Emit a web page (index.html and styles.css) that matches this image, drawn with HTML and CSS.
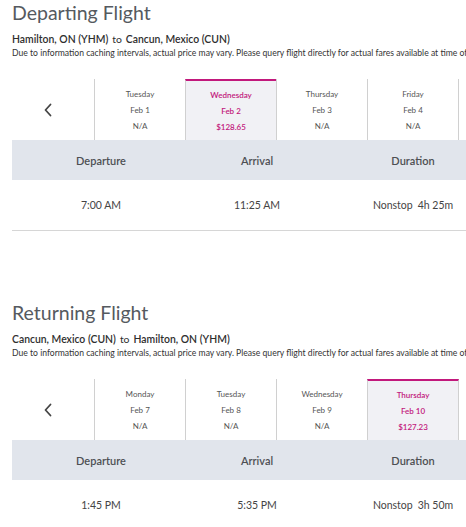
FILE: index.html
```html
<!DOCTYPE html>
<html>
<head>
<meta charset="utf-8">
<link rel="stylesheet" href="styles.css">
</head>
<body>
<div class="page">
  <section class="flight">
    <h1 class="title">Departing Flight</h1>
    <div class="route"><span class="city">Hamilton, ON (YHM)</span><span class="to">to</span><span class="city">Cancun, Mexico (CUN)</span></div>
    <p class="note">Due to information caching intervals, actual price may vary. Please query flight directly for actual fares available at time of query.</p>
    <div class="dates">
      <div class="nav"><svg width="10" height="14" viewBox="0 0 10 14"><path d="M7.5 1.5 L2.5 7 L7.5 12.5" fill="none" stroke="#444" stroke-width="1.8" stroke-linecap="round" stroke-linejoin="round"/></svg></div>
      <div class="day"><span>Tuesday</span><span>Feb 1</span><span>N/A</span></div>
      <div class="day selected"><span>Wednesday</span><span>Feb 2</span><span>$128.65</span></div>
      <div class="day"><span>Thursday</span><span>Feb 3</span><span>N/A</span></div>
      <div class="day"><span>Friday</span><span>Feb 4</span><span>N/A</span></div>
    </div>
    <div class="table">
      <div class="thead">
        <div>Departure</div><div>Arrival</div><div>Duration</div>
      </div>
      <div class="trow">
        <div>7:00 AM</div><div>11:25 AM</div><div><span class="stops">Nonstop</span>4h 25m</div>
      </div>
    </div>
  </section>
  <section class="flight">
    <h1 class="title">Returning Flight</h1>
    <div class="route"><span class="city">Cancun, Mexico (CUN)</span><span class="to">to</span><span class="city">Hamilton, ON (YHM)</span></div>
    <p class="note">Due to information caching intervals, actual price may vary. Please query flight directly for actual fares available at time of query.</p>
    <div class="dates">
      <div class="nav"><svg width="10" height="14" viewBox="0 0 10 14"><path d="M7.5 1.5 L2.5 7 L7.5 12.5" fill="none" stroke="#444" stroke-width="1.8" stroke-linecap="round" stroke-linejoin="round"/></svg></div>
      <div class="day"><span>Monday</span><span>Feb 7</span><span>N/A</span></div>
      <div class="day"><span>Tuesday</span><span>Feb 8</span><span>N/A</span></div>
      <div class="day"><span>Wednesday</span><span>Feb 9</span><span>N/A</span></div>
      <div class="day selected"><span>Thursday</span><span>Feb 10</span><span>$127.23</span></div>
    </div>
    <div class="table">
      <div class="thead">
        <div>Departure</div><div>Arrival</div><div>Duration</div>
      </div>
      <div class="trow">
        <div>1:45 PM</div><div>5:35 PM</div><div><span class="stops">Nonstop</span>3h 50m</div>
      </div>
    </div>
  </section>
</div>
</body>
</html>
```

FILE: styles.css
```css
html, body {
  margin: 0;
  padding: 0;
  background: #fff;
}
body {
  font-family: Lato, "Open Sans", "Liberation Sans", sans-serif;
  color: #444;
}
.page {
  width: 466px;
  height: 527px;
  overflow: hidden;
}
.flight {
  height: 300px;
  padding-left: 12px;
  box-sizing: border-box;
}
.title {
  margin: 0;
  font-size: 19.5px;
  line-height: 25px;
  font-weight: 400;
  color: #555a60;
  white-space: nowrap;
}
.route {
  margin-top: 6.5px;
  font-size: 10.4px;
  line-height: 14px;
  font-weight: 600;
  color: #2e2e2e;
  white-space: nowrap;
}
.route .to {
  font-weight: 400;
  margin: 0 4px;
}
.note {
  margin: 2px 0 0;
  font-size: 8.6px;
  line-height: 10px;
  color: #333;
  white-space: nowrap;
}
.dates {
  margin-top: 21.5px;
  display: flex;
  height: 61px;
}
.nav {
  width: 82px;
  flex: none;
  display: flex;
  align-items: center;
  padding-left: 31px;
  box-sizing: border-box;
}
.day {
  width: 91px;
  flex: none;
  box-sizing: border-box;
  border-left: 1px solid #d0d0d0;
  display: flex;
  flex-direction: column;
  align-items: center;
  justify-content: center;
  font-size: 8px;
  line-height: 16px;
  color: #555;
}
.day:last-child {
  width: 92px;
  border-right: 1px solid #d0d0d0;
}
.day.selected {
  background: #f1f1f5;
  border-top: 2px solid #c2187c;
  color: #c2187c;
  font-weight: 600;
}
.table {
  width: 600px;
}
.thead {
  display: grid;
  grid-template-columns: repeat(3, 156px);
  padding-left: 11px;
  height: 40px;
  align-items: center;
  background: #e1e5ec;
  font-size: 11px;
  font-weight: 600;
  color: #4d4f53;
  text-align: center;
}
.trow {
  display: grid;
  grid-template-columns: repeat(3, 156px);
  padding-left: 11px;
  height: 51px;
  box-sizing: border-box;
  align-items: center;
  border-bottom: 1px solid #d6d6d6;
  font-size: 10.5px;
  color: #444;
  text-align: center;
  width: 454px;
}
.stops {
  margin-right: 5px;
}
```
